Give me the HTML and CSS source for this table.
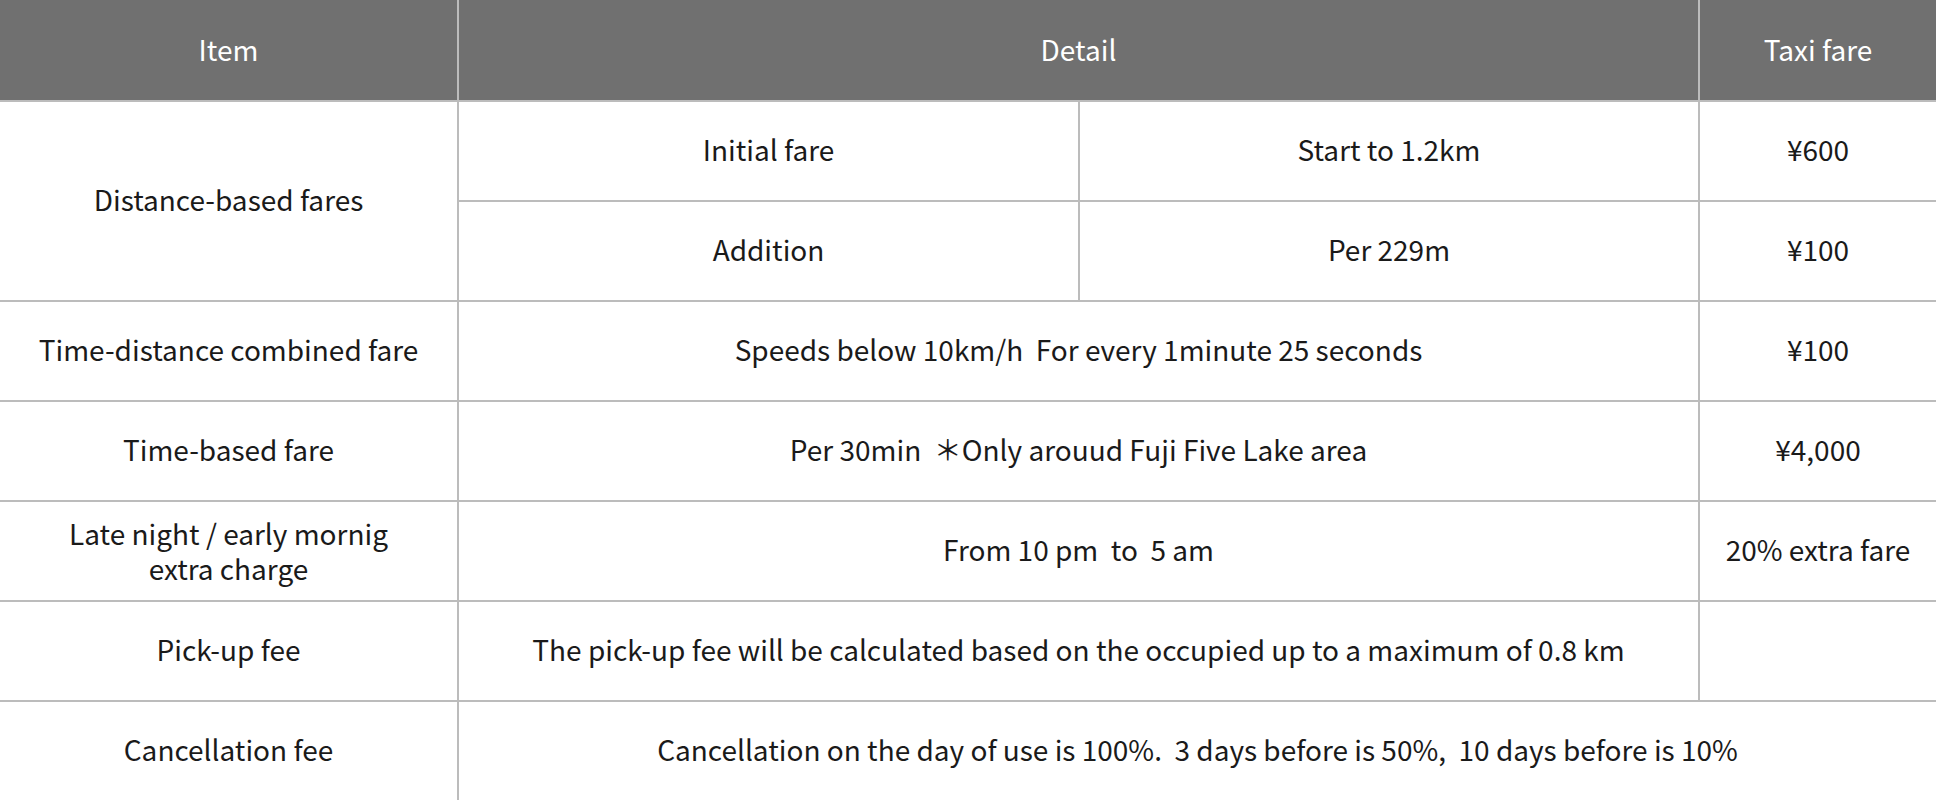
FILE: index.html
```html
<!DOCTYPE html>
<html lang="en">
<head>
<meta charset="utf-8">
<title>Taxi fare</title>
<link rel="stylesheet" href="styles.css">
</head>
<body>
<table class="fares">
  <colgroup>
    <col class="c-item">
    <col class="c-d1">
    <col class="c-d2">
    <col class="c-fare">
  </colgroup>
  <thead>
    <tr class="head">
      <th>Item</th>
      <th colspan="2">Detail</th>
      <th>Taxi fare</th>
    </tr>
  </thead>
  <tbody>
    <tr>
      <td rowspan="2">Distance-based fares</td>
      <td>Initial fare</td>
      <td>Start to 1.2km</td>
      <td>¥600</td>
    </tr>
    <tr>
      <td>Addition</td>
      <td>Per 229m</td>
      <td>¥100</td>
    </tr>
    <tr>
      <td>Time-distance combined fare</td>
      <td colspan="2">Speeds below 10km/h&nbsp; For every 1minute 25 seconds</td>
      <td>¥100</td>
    </tr>
    <tr>
      <td>Time-based fare</td>
      <td colspan="2">Per 30min&nbsp; ＊Only arouud Fuji Five Lake area</td>
      <td>¥4,000</td>
    </tr>
    <tr>
      <td class="two">Late night / early mornig<br>extra charge</td>
      <td colspan="2">From 10 pm&nbsp; to&nbsp; 5 am</td>
      <td>20% extra fare</td>
    </tr>
    <tr>
      <td>Pick-up fee</td>
      <td colspan="2">The pick-up fee will be calculated based on the occupied up to a maximum of 0.8 km</td>
      <td></td>
    </tr>
    <tr>
      <td>Cancellation fee</td>
      <td colspan="3">Cancellation on the day of use is 100%.&nbsp; 3 days before is 50%,&nbsp; 10 days before is 10%</td>
    </tr>
  </tbody>
</table>
</body>
</html>
```

FILE: styles.css
```css
html, body {
  margin: 0;
  padding: 0;
  background: #ffffff;
}

body {
  font-family: "Noto Sans CJK JP", "Noto Sans", sans-serif;
  color: #1a1a1a;
  overflow: hidden;
}

.fares {
  width: 1936px;
  table-layout: fixed;
  border-collapse: collapse;
  font-size: 28px;
}

.c-item { width: 458px; }
.c-d1 { width: 621px; }
.c-d2 { width: 620px; }
.c-fare { width: 237px; }

.fares th,
.fares td {
  height: 96px;
  padding: 0 0 2px;
  text-align: center;
  vertical-align: middle;
  border: 2px solid #bcbcbc;
  line-height: 1.4;
}

.fares th {
  height: 99px;
  padding: 0 0 1px;
  background: #707070;
  color: #ffffff;
  font-weight: 400;
  border-top: none;
  border-bottom: none;
  border-left-color: #c4c4c4;
}

.fares tr > :first-child {
  border-left: none;
}

.fares tr > :last-child {
  border-right: none;
}

.fares td.two {
  line-height: 35px;
  padding-bottom: 0;
  height: 98px;
}
```
